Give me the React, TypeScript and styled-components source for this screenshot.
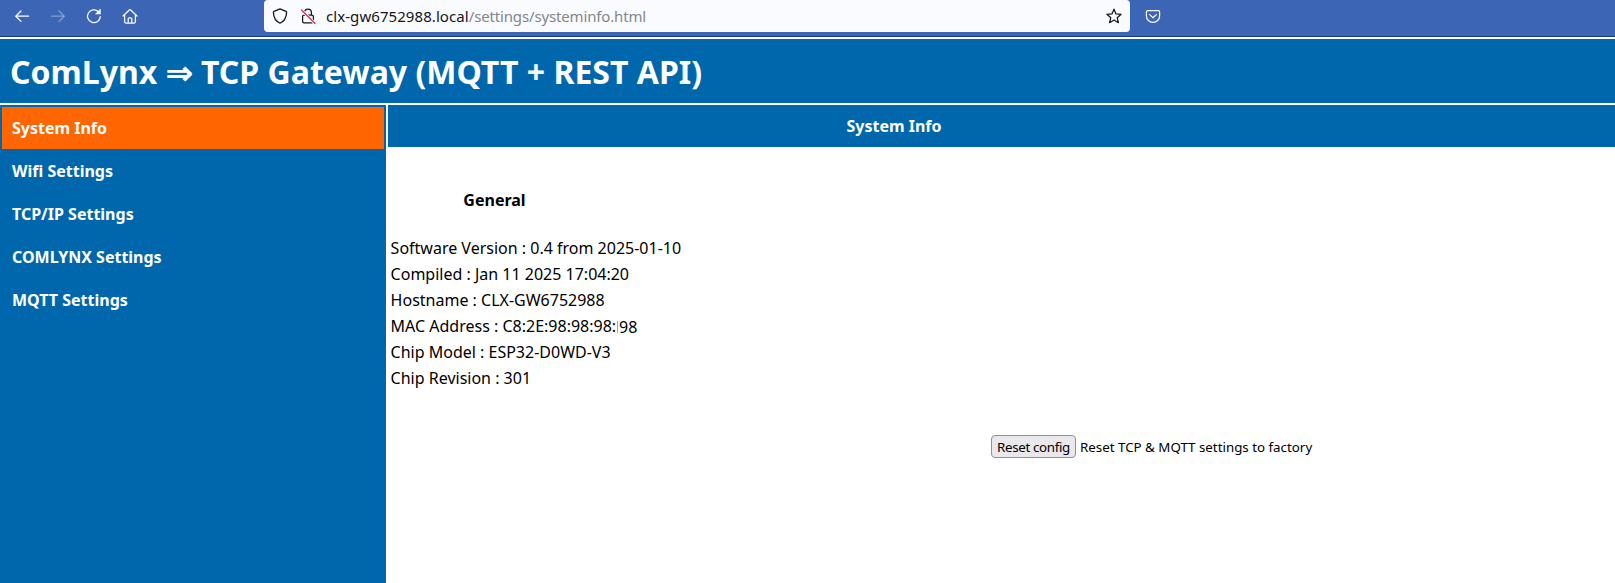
import React from 'react';
import styled, { createGlobalStyle } from 'styled-components';

const GlobalStyle = createGlobalStyle`
  * { box-sizing: border-box; }
  body {
    margin: 0;
    background: #fff;
    color: #000;
    font-family: 'Noto Sans', sans-serif;
    font-size: 16px;
    overflow: hidden;
  }
`;

const Page = styled.div`
  display: flex;
  flex-direction: column;
  height: 583px;
`;

const BrowserBar = styled.div`
  display: flex;
  flex: none;
  height: 37px;
  padding-left: 14px;
  background: #3d65b5;
  border-bottom: 1px solid #143a84;
  color: #fbfbfe;
`;

const NavButtons = styled.div`
  display: flex;
  align-items: center;
  gap: 20px;
  width: 250px;
  height: 32px;
`;

const Icon = styled.svg<{ $dim?: boolean }>`
  display: block;
  flex: none;
  width: 16px;
  height: 16px;
  fill: none;
  stroke: currentColor;
  stroke-width: 1.25;
  stroke-linecap: round;
  stroke-linejoin: round;
  overflow: visible;
  opacity: ${(p) => (p.$dim ? 0.4 : 1)};
`;

const AddressBar = styled.div`
  display: flex;
  align-items: center;
  width: 866px;
  height: 32px;
  padding: 0 8px;
  background: #f9fbff;
  border-radius: 4px;
  color: #15141a;
`;

const LockSlot = styled.div`
  margin-left: 12px;
`;

const Url = styled.div`
  flex: 1;
  margin-left: 10px;
  font-size: 15px;
  letter-spacing: 0.07px;
  line-height: 32px;
  white-space: nowrap;
`;

const UrlPath = styled.span`
  color: #84858b;
  letter-spacing: -0.15px;
`;

const PocketSlot = styled.div`
  display: flex;
  align-items: center;
  height: 32px;
  margin-left: 15px;
`;

const Header = styled.h1`
  flex: none;
  height: 64px;
  margin: 2px 0;
  padding: 1px 0 0 10px;
  background: #0067ac;
  color: #fff;
  font-size: 32px;
  font-weight: 700;
  line-height: 64px;
  letter-spacing: 0.01px;
  white-space: pre;
`;

const Body = styled.div`
  display: flex;
  flex: 1;
  gap: 2px;
`;

const Sidebar = styled.nav`
  display: flex;
  flex-direction: column;
  gap: 1px;
  width: 386px;
  padding: 2px;
  background: #0067ac;
`;

const MenuItem = styled.a<{ $active?: boolean }>`
  height: 42px;
  padding-left: 10px;
  background: ${(p) => (p.$active ? '#ff6600' : 'transparent')};
  color: #fff;
  font-weight: 700;
  line-height: 42px;
`;

const Content = styled.main`
  flex: 1;
`;

const SectionTitle = styled.div`
  height: 42px;
  padding-right: 215px;
  background: #0067ac;
  color: #fff;
  font-weight: 700;
  line-height: 42px;
  text-align: center;
`;

const GroupTitle = styled.div`
  width: 213px;
  margin-top: 40px;
  font-weight: 700;
  line-height: 26px;
  text-align: center;
`;

const InfoList = styled.div`
  margin-top: 22px;
  padding-left: 2.6px;
  line-height: 26px;
`;

const InfoRow = styled.div`
  height: 26px;
  white-space: pre;
`;

const LastOctet = styled.span`
  position: relative;
  top: 1px;
  padding-left: 3px;
  background: linear-gradient(#a8a8a8, #a8a8a8) 1px 5px / 1px 12px no-repeat;
`;

const ResetRow = styled.div`
  display: flex;
  align-items: center;
  gap: 4px;
  margin: 44px 0 0 603px;
  font-size: 13.333px;
`;

const ResetButton = styled.button`
  width: 85px;
  height: 23px;
  padding: 1px 0 0;
  background: #e9e9ed;
  border: 1px solid #8f8f9d;
  border-radius: 4px;
  color: #000;
  font: 13.333px / 21px 'Noto Sans', sans-serif;
  letter-spacing: -0.34px;
  white-space: nowrap;
`;

const menu = ['System Info', 'Wifi Settings', 'TCP/IP Settings', 'COMLYNX Settings', 'MQTT Settings'];

const info = [
  ['Software Version', '0.4 from 2025-01-10'],
  ['Compiled', 'Jan 11 2025 17:04:20'],
  ['Hostname', 'CLX-GW6752988'],
  ['MAC Address', 'C8:2E:98:98:98:', '98'],
  ['Chip Model', 'ESP32-D0WD-V3'],
  ['Chip Revision', '301'],
];

export default function App() {
  return (
    <Page>
      <GlobalStyle />
      <BrowserBar>
        <NavButtons>
          <Icon viewBox="0 0 16 16"><path d="M14.5 8.2H1.8M7 3L1.7 8.2L7 13.4" /></Icon>
          <Icon viewBox="0 0 16 16" $dim><path d="M1.5 8.2H14.2M9 3L14.3 8.2L9 13.4" /></Icon>
          <Icon viewBox="0 0 16 16">
            <path d="M12.4 3.7A6.4 6.4 0 1 0 14.3 8.6" />
            <path d="M14.3 1.6V5.9H10Z" fill="currentColor" strokeWidth="0.8" />
          </Icon>
          <Icon viewBox="0 0 16 16">
            <path d="M1 8L7.3 2Q8 1.4 8.7 2L15 8M2.6 7V13.8Q2.6 15 3.8 15H12.2Q13.4 15 13.4 13.8V7M6.2 14.8V10.8Q6.2 9.8 7.2 9.8H8.8Q9.8 9.8 9.8 10.8V14.8" />
          </Icon>
        </NavButtons>
        <AddressBar>
          <Icon viewBox="0 0 16 16">
            <path d="M8 .9L14 3.3Q14.7 3.6 14.6 4.4C14.4 9.3 12.5 13.2 8 15.2C3.5 13.2 1.6 9.3 1.4 4.4Q1.3 3.6 2 3.3Z" />
          </Icon>
          <LockSlot>
            <Icon viewBox="0 0 16 16">
              <path d="M4.6 7V4.4A3.4 3.4 0 0 1 11.4 4.4V7M4 7H12Q13.4 7 13.4 8.4V13.4Q13.4 14.8 12 14.8H4Q2.6 14.8 2.6 13.4V8.4Q2.6 7 4 7Z" />
              <path d="M1.5 2L15 15.5" stroke="#f9fbff" strokeWidth="3" />
              <path d="M1.5 2L15 15.5" stroke="#e22850" />
            </Icon>
          </LockSlot>
          <Url>clx-gw6752988.local<UrlPath>/settings/systeminfo.html</UrlPath></Url>
          <Icon viewBox="0 0 16 16">
            <path d="M8 1.2L10 5.9L15.1 6.3L11.2 9.7L12.4 14.7L8 12L3.6 14.7L4.8 9.7L.9 6.3L6 5.9Z" />
          </Icon>
        </AddressBar>
        <PocketSlot>
          <Icon viewBox="0 0 16 16">
            <path d="M2.6 2.6H13.4Q14.6 2.6 14.6 3.8V8A6.6 6.3 0 0 1 1.4 8V3.8Q1.4 2.6 2.6 2.6ZM4.6 6.6L8 9.8L11.4 6.6" />
          </Icon>
        </PocketSlot>
      </BrowserBar>
      <Header>ComLynx ⇒ TCP Gateway (MQTT + REST API)</Header>
      <Body>
        <Sidebar>
          {menu.map((label, i) => (
            <MenuItem key={label} $active={i === 0}>{label}</MenuItem>
          ))}
        </Sidebar>
        <Content>
          <SectionTitle>System Info</SectionTitle>
          <GroupTitle>General</GroupTitle>
          <InfoList>
            {info.map(([name, value, tail]) => (
              <InfoRow key={name}>
                {`${name} : ${value}`}
                {tail && <LastOctet>{tail}</LastOctet>}
              </InfoRow>
            ))}
          </InfoList>
          <ResetRow>
            <ResetButton>Reset config</ResetButton>
            <span>Reset TCP &amp; MQTT settings to factory</span>
          </ResetRow>
        </Content>
      </Body>
    </Page>
  );
}
